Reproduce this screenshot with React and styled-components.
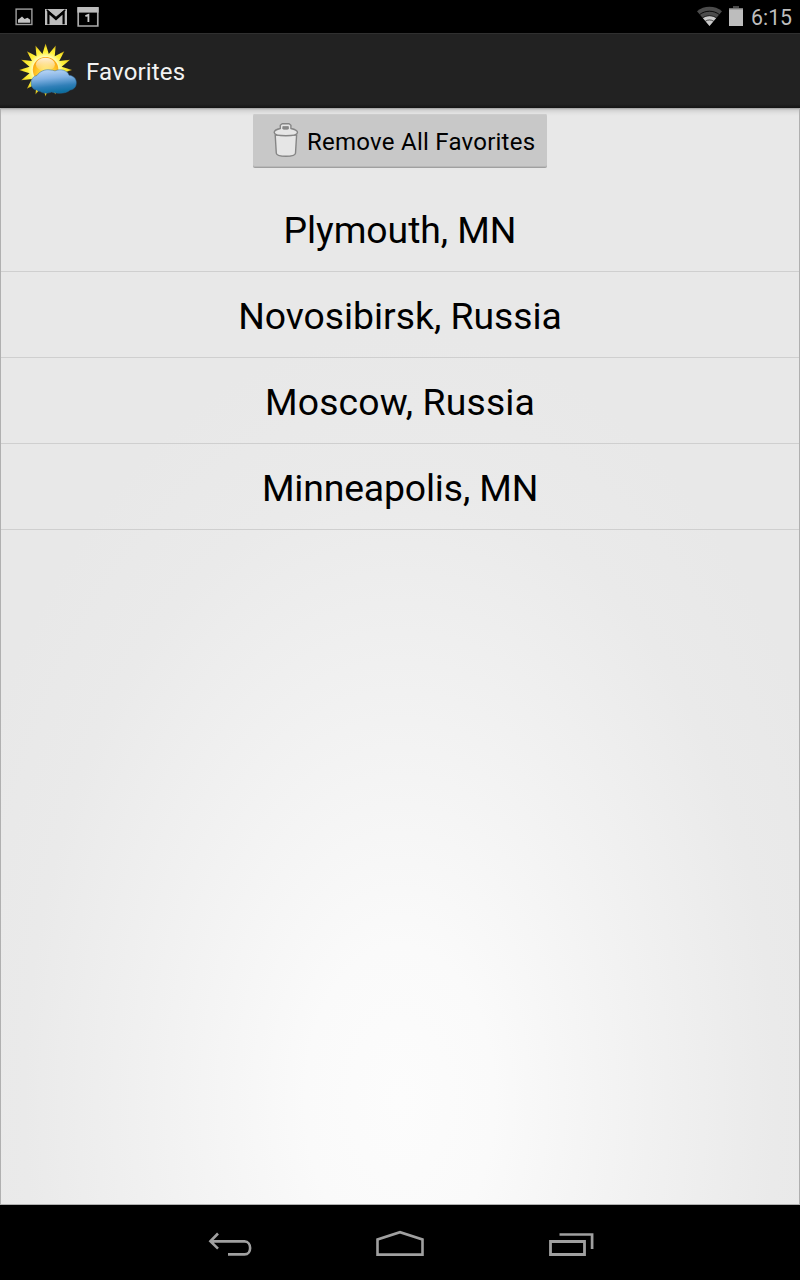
import React from 'react';
import styled, { createGlobalStyle } from 'styled-components';

const GlobalStyle = createGlobalStyle`
  body { margin: 0; background: #000; font-family: Roboto, "Liberation Sans", sans-serif; }
  * { box-sizing: border-box; }
  svg { display: block; flex: none; }
`;

const Screen = styled.div`
  width: 800px;
  height: 1280px;
  display: flex;
  flex-direction: column;
  overflow: hidden;
`;

const StatusBar = styled.header`
  height: 33px;
  flex: none;
  display: flex;
  justify-content: space-between;
  background: #000;
`;

const Clock = styled.span`
  font-size: 21.3px;
  line-height: 36px;
  color: #bebebe;
  width: 41px;
  margin-left: 7px;
  white-space: nowrap;
`;

const StatusGroup = styled.div`
  display: flex;
  padding-right: 8px;
`;

const ActionBar = styled.div`
  height: 75px;
  flex: none;
  display: flex;
  padding-left: 18px;
  background: linear-gradient(#303030 0 1px, #222 1px 71px, #1b1b1b 73px, #141414 75px);
`;

const Title = styled.h1`
  margin: 0 0 0 6px;
  font-size: 24px;
  font-weight: 400;
  line-height: 78px;
  letter-spacing: 0.15px;
  color: #f3f3f3;
`;

const Content = styled.main`
  height: 1097px;
  flex: none;
  display: flex;
  flex-direction: column;
  align-items: center;
  padding-top: 6px;
  border: solid #b0b0b0;
  border-width: 0 1px 1px;
  background:
    linear-gradient(rgba(0, 0, 0, 0.32), rgba(0, 0, 0, 0.1) 2px, rgba(0, 0, 0, 0.03) 5px, transparent 8px),
    radial-gradient(470px 770px at 50% 992px, #fcfcfc 0, #fafafa 20%, #f1f1f1 53%, #eaeaea 80%, #e8e8e8 100%);
`;

const RemoveButton = styled.button`
  width: 294px;
  height: 54px;
  flex: none;
  display: flex;
  padding: 0 0 0 16px;
  border: 0;
  border-bottom: 1px solid #a0a0a0;
  border-radius: 2px;
  background: #c8c8c8;
  box-shadow: inset 0 -1px #b8b8b8, inset 0 1px #cccccc;
  font-family: inherit;
  font-size: 24px;
  line-height: 56px;
  letter-spacing: 0.25px;
  color: #000;
  white-space: nowrap;
`;

const List = styled.ul`
  width: 100%;
  margin: 18px 0 0;
  padding: 0;
  list-style: none;
`;

const City = styled.li`
  height: 86px;
  border-bottom: 1px solid #cfcfcf;
  font-size: 37.33px;
  line-height: 89px;
  letter-spacing: ${(p) => p.$tracking}px;
  text-align: center;
  color: #000;
`;

const NavBar = styled.nav`
  flex: 1;
  background: #000;
`;

const cities = [
  { name: 'Plymouth, MN', tracking: -0.05 },
  { name: 'Novosibirsk, Russia', tracking: -0.02 },
  { name: 'Moscow, Russia', tracking: 0.15 },
  { name: 'Minneapolis, MN', tracking: -0.15 },
];

const Notifications = () => (
  <svg width="110" height="33" viewBox="0 0 110 33">
    <rect x="16.1" y="9.1" width="15.8" height="15.4" fill="none" stroke="#a0a0a0" strokeWidth="1.4" />
    <path d="M18 22.8v-3.300l1.700-1 2.300-2 2.600 2.400 2.900-1.100 2.700 2v3z" fill="#c4c4c4" />
    <path d="M45 9h22v16H45z" fill="#bdbdbd" />
    <path d="M48.4 24.3V12.1L56 19l7.6-6.9v12.2" fill="none" stroke="#000" strokeWidth="2.2" />
    <path d="M46.6 9.8L56 17.4l9.4-7.6" fill="none" stroke="#000" strokeWidth="1.2" />
    <path d="M78.2 8h19.6v18H78.2z" fill="none" stroke="#aaa" strokeWidth="1.7" />
    <path d="M77.4 7h21.2v5.600H77.4z" fill="#bdbdbd" />
    <path d="M85.4 16.2l3-1.300V22" fill="none" stroke="#c9c9c9" strokeWidth="1.8" />
  </svg>
);

const Signal = () => (
  <svg width="47" height="33" viewBox="697 0 47 33">
    <path d="M697 11.2C704 5.4 715 5.4 722 11.2L709.5 26z" fill="#4c4c4c" />
    <path d="M702.8 18.1c3.8-2.9 9.6-2.9 13.4 0L709.5 26z" fill="#cbcbcb" />
    <g fill="none" stroke="#000" strokeWidth="0.9">
      <path d="M699.6 14.6c5.7-4.5 14.1-4.5 19.8 0" />
      <path d="M702.5 18c4-3 10-3 14 0" strokeOpacity="0.7" />
      <path d="M705.2 21.3c2.6-1.8 6-1.8 8.6 0" strokeOpacity="0.7" />
    </g>
    <path d="M733 6h6v3h-6z" fill="#4a4a4a" />
    <path d="M729 8h14v18h-14z" fill="#bdbdbd" />
    <path d="M729 8h14v1.4h-14z" fill="#777" />
  </svg>
);

const rays = Array.from({ length: 32 }, (_, i) => {
  const a = (i * Math.PI) / 16 - Math.PI / 2;
  const r = i % 2 ? 16.4 : 26.5;
  return `${(45.6 + r * Math.cos(a)).toFixed(2)},${(70 + r * Math.sin(a)).toFixed(2)}`;
}).join(' ');

const Weather = () => (
  <svg width="62" height="75" viewBox="18 33 62 75">
    <defs>
      <radialGradient id="ray" gradientUnits="userSpaceOnUse" cx="45.6" cy="70" r="27">
        <stop offset="0.5" stopColor="#fffbb0" />
        <stop offset="0.66" stopColor="#fff23c" />
        <stop offset="0.82" stopColor="#f8e42c" />
        <stop offset="1" stopColor="#b08e08" />
      </radialGradient>
      <radialGradient id="sun" gradientUnits="userSpaceOnUse" cx="46" cy="73" r="17">
        <stop offset="0" stopColor="#fff36a" />
        <stop offset="0.55" stopColor="#ffc629" />
        <stop offset="1" stopColor="#f99a08" />
      </radialGradient>
      <linearGradient id="shine" x1="0" y1="0" x2="0" y2="1">
        <stop offset="0" stopColor="#fff" stopOpacity="0.85" />
        <stop offset="1" stopColor="#fff" stopOpacity="0.1" />
      </linearGradient>
      <linearGradient id="cloud" x1="0.4" y1="0" x2="0.6" y2="1">
        <stop offset="0" stopColor="#b9d5f5" />
        <stop offset="0.35" stopColor="#82b2e4" />
        <stop offset="0.7" stopColor="#307fb8" />
        <stop offset="1" stopColor="#086c9c" />
      </linearGradient>
    </defs>
    <polygon points={rays} fill="url(#ray)" />
    <circle cx="45.6" cy="69.7" r="12.8" fill="url(#sun)" />
    <ellipse cx="45.4" cy="64.5" rx="9.5" ry="6.7" fill="url(#shine)" />
    <path d="M36.7 90C32.5 89.6 31 86 31.2 82.7C31.2 79.5 33 76.3 37 75.5C39.5 71.5 45 69 50 69.9C51.7 70 53.5 70.3 55 70.9C60 68.5 67.5 70 69 75.3C73.3 75.8 76.3 78.5 76.3 82.5C76.3 87 74 89.5 70 90C67.5 92.5 63 93.5 58.3 93.2C55.5 93 53.5 92.8 51.7 92C47.5 93.8 42.5 93.4 40 91.3C38.5 91.2 37.5 90.8 36.7 90Z" fill="url(#cloud)" stroke="#286ca1" strokeWidth=".5" />
  </svg>
);

const Trash = () => (
  <svg width="38" height="52" viewBox="269 114 38 52">
    <g fill="#e6e6e6" stroke="#858585" strokeWidth="1.4" strokeLinejoin="round">
      <path d="M275.2 135l1.1 18.2c.4 4 18.8 4 19.2 0l1.1-18.2z" />
      <path d="M280.3 128.5v-3.3l1.8-1.4h7l1.8 1.4v3.3c4 .8 6.6 2.2 6.6 4 0 2.1-5.3 3.2-11.7 3.2s-11.6-1.1-11.6-3.2c0-1.8 2.3-3.2 6.1-4z" />
      <path d="M282.8 129v-2.4h5.6v2.4c-1.7.4-3.9.4-5.6 0z" fill="#888" strokeWidth=".8" />
    </g>
  </svg>
);

const NavIcons = () => (
  <svg width="800" height="75" viewBox="0 1205 800 75" fill="none" stroke="#a0a0a0">
    <path d="M218 1233.5l-7.6 7.8 7.6 7.3M210.5 1241.4h34c7.5 0 7.5 13 0 13H228" strokeWidth="2.6" />
    <path d="M377.5 1254.6v-15.2l22.5-7.2 22.5 7.2v15.2z" strokeWidth="2.6" />
    <path d="M550.5 1241.5h34v13h-34z" strokeWidth="2.8" />
    <path d="M559.5 1234.5h32.6v14.5" strokeWidth="2.7" />
  </svg>
);

export default function App() {
  return (
    <Screen>
      <GlobalStyle />
      <StatusBar>
        <Notifications />
        <StatusGroup>
          <Signal />
          <Clock>6:15</Clock>
        </StatusGroup>
      </StatusBar>
      <ActionBar>
        <Weather />
        <Title>Favorites</Title>
      </ActionBar>
      <Content>
        <RemoveButton>
          <Trash />
          <span>Remove All Favorites</span>
        </RemoveButton>
        <List>
          {cities.map((city) => (
            <City key={city.name} $tracking={city.tracking}>{city.name}</City>
          ))}
        </List>
      </Content>
      <NavBar>
        <NavIcons />
      </NavBar>
    </Screen>
  );
}
